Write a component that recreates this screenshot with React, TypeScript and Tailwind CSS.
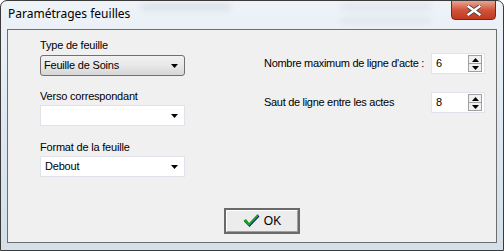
import React from "react";

function Arrow() {
  return (
    <svg width="7" height="4" viewBox="0 0 7 4" className="block">
      <path d="M0 0 H7 L3.5 4 Z" fill="#000" />
    </svg>
  );
}

function Combo({ value, raised }: { value: string; raised?: boolean }) {
  return (
    <div
      className={
        raised
          ? "flex h-[21px] w-[145px] items-center justify-between rounded-[3px] border border-[#707070] bg-gradient-to-b from-[#f2f2f2] via-[#e8e8e8] to-[#d6d6d6] pl-[3px] pr-[6px]"
          : "flex h-[21px] w-[145px] items-center justify-between border border-[#e2e3ea] bg-white pl-[4px] pr-[6px]"
      }
    >
      <span className="text-[11px] leading-[13px] tracking-[-0.2px] text-black">{value}</span>
      <Arrow />
    </div>
  );
}

function Spin({ value }: { value: string }) {
  return (
    <div className="flex h-[21px] w-[54px] items-center justify-between border border-[#e2e3ea] bg-white pl-[4px] pr-[2px]">
      <span className="text-[11px] leading-[13px] text-black">{value}</span>
      <div className="flex h-[17px] w-[14px] flex-col border border-[#a0a0a0] bg-[#f0f0f0]">
        <div className="flex flex-1 items-center justify-center border-b border-[#a0a0a0]">
          <svg width="7" height="4" viewBox="0 0 7 4">
            <path d="M0 4 H7 L3.5 0 Z" fill="#000" />
          </svg>
        </div>
        <div className="flex flex-1 items-center justify-center">
          <svg width="7" height="4" viewBox="0 0 7 4">
            <path d="M0 0 H7 L3.5 4 Z" fill="#000" />
          </svg>
        </div>
      </div>
    </div>
  );
}

export default function App() {
  return (
    <div
      className="relative flex h-[251px] w-[504px] flex-col overflow-hidden rounded-t-[7px] border border-[#3a3a3a] bg-gradient-to-b from-[#eef3f8] via-[#dfe8f1] to-[#d4dfea]"
      style={{ fontFamily: '"Liberation Sans", Arial, sans-serif' }}
    >
      {/* blurred background hints */}
      <div className="pointer-events-none absolute left-[140px] top-[3px] h-[6px] w-[90px] rounded-full bg-[#b9c3cd] opacity-40 blur-[3px]" />
      <div className="pointer-events-none absolute left-[340px] top-[3px] h-[5px] w-[90px] rounded-full bg-[#b9c3cd] opacity-30 blur-[3px]" />
      <div className="pointer-events-none absolute left-[340px] top-[17px] h-[5px] w-[90px] rounded-full bg-[#b9c3cd] opacity-30 blur-[3px]" />

      {/* title bar */}
      <div className="relative flex h-[27px] items-start">
        <span
          className="ml-[7px] mt-[5px] text-[12px] leading-[16px] text-black"
          style={{ fontFamily: '"Noto Sans", "Open Sans", sans-serif' }}
        >
          Paramétrages feuilles
        </span>
        <div className="absolute right-[7px] top-[-1px] flex h-[20px] w-[45px] items-center justify-center rounded-b-[4px] border border-[#6b2a22] bg-gradient-to-b from-[#e8a493] via-[#d0533a] to-[#c0391f]">
          <svg width="14" height="11" viewBox="0 0 14 11">
            <path
              d="M1.5 1.5 L12.5 9.5 M12.5 1.5 L1.5 9.5"
              stroke="#3b3b3b"
              strokeWidth="4"
              strokeLinecap="square"
            />
            <path
              d="M1.5 1.5 L12.5 9.5 M12.5 1.5 L1.5 9.5"
              stroke="#ffffff"
              strokeWidth="2.4"
              strokeLinecap="square"
            />
          </svg>
        </div>
      </div>

      {/* client area */}
      <div className="mx-[6px] mb-[7px] mt-[1px] flex flex-1 flex-col border border-[#6e6e6e] bg-[#f0f0f0]">
        <div className="flex pl-[32px] pt-[9px]">
          <div className="flex w-[145px] flex-col">
            <span className="text-[11px] leading-[13px] tracking-[-0.2px] text-black">Type de feuille</span>
            <div className="mt-[3px]">
              <Combo value="Feuille de Soins" raised />
            </div>
            <span className="mt-[14px] text-[11px] leading-[13px] tracking-[-0.2px] text-black">
              Verso correspondant
            </span>
            <div className="mt-[2px]">
              <Combo value="" />
            </div>
            <span className="mt-[15px] text-[11px] leading-[13px] tracking-[-0.2px] text-black">
              Format de la feuille
            </span>
            <div className="mt-[2px]">
              <Combo value="Debout" />
            </div>
          </div>
          <div className="ml-[79px] flex flex-col pt-[14px]">
            <div className="flex items-center">
              <span className="w-[167px] whitespace-nowrap text-[11px] leading-[13px] tracking-[-0.3px] text-black">
                Nombre maximum de ligne d'acte :
              </span>
              <Spin value="6" />
            </div>
            <div className="mt-[18px] flex items-center">
              <span className="w-[167px] whitespace-nowrap text-[11px] leading-[13px] tracking-[-0.3px] text-black">
                Saut de ligne entre les actes
              </span>
              <Spin value="8" />
            </div>
          </div>
        </div>
        <div className="mt-[31px] flex pl-[216px]">
          <div className="flex h-[26px] w-[76px] items-center justify-center border-2 border-[#6a6a6a] bg-[#f0f0f0]">
            <div className="flex h-full w-full items-center justify-center border border-white border-b-[#a0a0a0] border-r-[#a0a0a0] bg-[#ececec]">
              <svg width="17" height="14" viewBox="0 0 17 14" className="mr-[4px]">
                <path
                  d="M1 7.5 L3.5 6 L6.5 10 L15 1 L16.5 2.5 L6.5 13 Z"
                  fill="#0b1e8a"
                />
                <path
                  d="M0.5 6.5 L3 5 L6 9 L14.5 0 L16 1.5 L6 12 Z"
                  fill="#1fa31f"
                />
              </svg>
              <span className="text-[12px] leading-[14px] text-black">OK</span>
            </div>
          </div>
        </div>
      </div>
    </div>
  );
}
